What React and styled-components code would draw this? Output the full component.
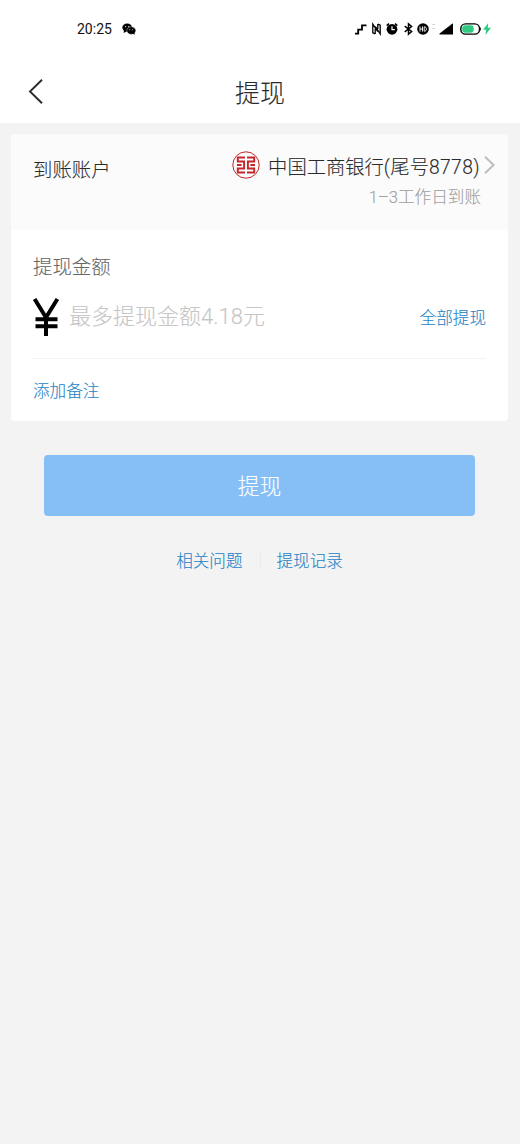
import React from 'react';
import styled, { createGlobalStyle } from 'styled-components';

const Global = createGlobalStyle`
  * { box-sizing: border-box; }
  body { margin: 0; background: #f3f3f3; }
`;

const Page = styled.div`
  width: 520px;
  height: 1144px;
  background: #f3f3f3;
  font-family: "Noto Sans CJK SC", sans-serif;
  font-weight: 300;
  color: #2b2b2b;
  -webkit-text-stroke: 0.1px currentColor;
`;

const StatusBar = styled.header`
  display: flex;
  align-items: center;
  height: 58px;
  padding: 0 29px 0 77px;
  background: #fff;
  color: #000;
`;

const Clock = styled.span`
  font: 400 14px/20px Roboto, sans-serif;
  -webkit-text-stroke: 0;
  color: #111;
  width: 45px;
`;

const StatusIcons = styled.div`
  display: flex;
  align-items: center;
  margin-left: auto;
`;

const Svg = styled.svg`
  display: block;
  flex: none;
  overflow: visible;
  margin-left: ${(p) => p.$gap || 0}px;
`;

const TitleBar = styled.div`
  display: grid;
  grid-template-columns: 60px 1fr 60px;
  align-items: center;
  height: 65px;
  padding-top: 1px;
  background: #fff;
`;

const Title = styled.h1`
  margin: 0;
  text-align: center;
  font-size: 25px;
  line-height: 36px;
  font-weight: 300;
`;

const Card = styled.section`
  margin: 11px 11px 0 11px;
  width: 497px;
  height: 287px;
  border-radius: 4px;
  background: #fff;
  overflow: hidden;
`;

const AccountRow = styled.div`
  display: flex;
  justify-content: space-between;
  height: 96px;
  padding: 0 13px 0 22px;
  background: #fbfbfb;
`;

const Label = styled.div`
  font-size: 19.4px;
  line-height: 28px;
  color: ${(p) => p.$color || '#2b2b2b'};
  margin-top: ${(p) => p.$top}px;
`;

const Account = styled.div`
  display: flex;
  flex-direction: column;
  align-items: flex-end;
  padding-top: 16px;
`;

const Bank = styled.div`
  display: flex;
  align-items: center;
  height: 30px;
  font-size: 19.3px;
  white-space: nowrap;
`;

const BankName = styled.span`
  margin: 1px 4px 0 8px;
`;

const Num = styled.span`
  font-family: Roboto, sans-serif;
  font-weight: 300;
  letter-spacing: ${(p) => p.$track || 0}px;
`;

const Arrival = styled.div`
  margin: 4px 14px 0 0;
  font-size: 16.6px;
  line-height: 24px;
  color: #a0a0a0;
`;

const AmountSection = styled.div`
  padding: 0 22px;
`;

const AmountRow = styled.div`
  display: flex;
  align-items: center;
  height: 79px;
  border-bottom: 1px solid #f3f3f3;
`;

const Placeholder = styled.span`
  margin: -8px 0 0 10px;
  font-size: 22px;
  line-height: 32px;
  color: #c6c6c6;
`;

const Link = styled.a`
  font-size: 16.6px;
  line-height: 24px;
  color: #2483c6;
`;

const AllLink = styled(Link)`
  margin: -4px 0 0 auto;
`;

const Note = styled.div`
  display: flex;
  padding-top: 19px;
`;

const Submit = styled.button`
  display: block;
  width: 431px;
  height: 61px;
  margin: 34px 0 0 44px;
  padding: 0 0 1px;
  border: 0;
  border-radius: 4px;
  background: #86bef6;
  color: #fff;
  font: 300 21.8px/32px "Noto Sans CJK SC", sans-serif;
`;

const Footer = styled.nav`
  display: flex;
  justify-content: center;
  align-items: center;
  margin: 32px 1px 0 0;
`;

const Divider = styled.i`
  width: 1px;
  height: 18px;
  margin: 0 16px 0 17px;
  background: #ececec;
`;

const WeChat = () => (
  <Svg width="14" height="12" viewBox="0 0 14 12">
    <ellipse cx="5.2" cy="4.6" rx="4.9" ry="4.2" />
    <path d="M2 7.5 1.6 10 4.5 8.6Z" />
    <ellipse cx="9.3" cy="7.6" rx="4.5" ry="3.8" stroke="#fff" strokeWidth=".4" />
    <path d="m10.5 10.5 2.2 1.3-.3-2.5Z" />
    <g fill="#fff"><circle cx="3.6" cy="3.6" r=".55" /><circle cx="6.7" cy="3.6" r=".55" /><circle cx="7.8" cy="6.8" r=".5" /><circle cx="10.7" cy="6.8" r=".5" /></g>
  </Svg>
);

const Stairs = () => (
  <Svg width="12" height="11" viewBox="0 0 12 11" fill="none" stroke="#000" strokeWidth="1.8">
    <path d="M0 9.6H3.2V5.6H7V1.4H11.5" />
  </Svg>
);

const Nfc = () => (
  <Svg $gap={5} width="9" height="12" viewBox="0 0 9 12" fill="none" stroke="#000" strokeWidth="1.3">
    <path d="M3.2 10.9 .8 9.8V1.2L5.6 8.4M5.8 1.1 8.2 2.2V10.8L3.4 3.6M3.2 6V10.9M5.8 1.1V6" />
  </Svg>
);

const Alarm = () => (
  <Svg $gap={5} width="12" height="12" viewBox="0 0 12 12">
    <circle cx="6" cy="6.3" r="5.4" />
    <path d="M.7 2.6 3 .7M11.3 2.6 9 .7" stroke="#000" strokeWidth="1.5" />
    <path d="M6 3.2V6.6H8.8" fill="none" stroke="#fff" strokeWidth="1.2" />
  </Svg>
);

const Bluetooth = () => (
  <Svg $gap={6} width="9" height="12" viewBox="0 0 9 12" fill="none" stroke="#000" strokeWidth="1.5">
    <path d="M.7 3.2 7.6 8.5 4.5 11.2V.8L7.6 3.5.7 8.8" />
  </Svg>
);

const Hd = () => (
  <Svg $gap={4} width="12" height="12" viewBox="0 0 12 12">
    <circle cx="6" cy="6" r="5.8" />
    <path d="M3 3.4V8.6M5.5 3.4V8.6M3 6H5.5M7.2 3.8V8.2H7.6C10 8.2 10 3.8 7.6 3.8Z" fill="none" stroke="#fff" strokeWidth=".9" />
  </Svg>
);

const Signal = () => (
  <Svg $gap={3} width="22" height="12" viewBox="0 0 22 12">
    <path d="M.5 1.5H2.8M.5 5.5H2.8" stroke="#ccc" />
    <path d="M21 .8V11.4H7.6Q7 11 7.6 10.4L19.8.9Q20.8 .2 21 .8Z" />
  </Svg>
);

const Battery = () => (
  <Svg $gap={6} width="21" height="12" viewBox="0 0 21 12">
    <rect x=".8" y=".9" width="18.7" height="10.2" rx="4.7" fill="#fff" stroke="#000" strokeWidth="1.4" />
    <path d="M20.3 4.5V7.5" stroke="#000" />
    <rect x="2.2" y="2.3" width="11.5" height="7.4" rx="3.2" fill="#30cb83" />
  </Svg>
);

const Bolt = () => (
  <Svg $gap={2} width="8" height="12" viewBox="0 0 8 12" fill="#30cb83">
    <path d="M5.2 0 0 6.8H3L2.5 12 8 4.8H4.8Z" />
  </Svg>
);

const Back = () => (
  <Svg $gap={29} width="14" height="25" viewBox="0 0 14 25" fill="none" stroke="#2b2b2b" strokeWidth="1.9">
    <path d="M13 .8 1 12.5 13 24.2" />
  </Svg>
);

const IcbcLogo = () => (
  <Svg width="28" height="28" viewBox="0 0 28 28" fill="none" stroke="#c4262b">
    <circle cx="14" cy="14" r="13.2" strokeWidth="1" />
    <path d="M13 6.5H5.8V10.5H12.1V17.5H5.8V21.5H13M5 14H9.6M15 6.5H22.2V10.5H15.9V17.5H22.2V21.5H15M23 14H18.4" strokeWidth="1.9" />
  </Svg>
);

const Chevron = () => (
  <Svg width="11" height="18" viewBox="0 0 11 18" fill="none" stroke="#bdbdbd" strokeWidth="2">
    <path d="M1 .8 9.6 9 1 17.2" />
  </Svg>
);

const Yen = () => (
  <Svg width="26" height="37" viewBox="0 0 26 37" fill="none" stroke="#000" strokeWidth="4">
    <path d="M1.6 0 13 18.5 24.4 0M13 17V37M2.5 20.2H24.5M2.5 27.2H24.5" />
  </Svg>
);

const YenBox = styled.span`
  margin-top: -4px;
`;

export default function App() {
  return (
    <Page>
      <Global />
      <StatusBar>
        <Clock>20:25</Clock>
        <WeChat />
        <StatusIcons>
          <Stairs /><Nfc /><Alarm /><Bluetooth /><Hd /><Signal /><Battery /><Bolt />
        </StatusIcons>
      </StatusBar>
      <TitleBar>
        <Back />
        <Title>提现</Title>
      </TitleBar>
      <Card>
        <AccountRow>
          <Label $top={21}>到账账户</Label>
          <Account>
            <Bank>
              <IcbcLogo />
              <BankName>中国工商银行<Num $track={0.4}>(</Num>尾号<Num $track={0.4}>8778)</Num></BankName>
              <Chevron />
            </Bank>
            <Arrival><Num>1–3</Num>工作日到账</Arrival>
          </Account>
        </AccountRow>
        <AmountSection>
          <Label $top={22} $color="#666">提现金额</Label>
          <AmountRow>
            <YenBox><Yen /></YenBox>
            <Placeholder>最多提现金额<Num>4.18</Num>元</Placeholder>
            <AllLink>全部提现</AllLink>
          </AmountRow>
          <Note><Link>添加备注</Link></Note>
        </AmountSection>
      </Card>
      <Submit>提现</Submit>
      <Footer>
        <Link>相关问题</Link>
        <Divider />
        <Link>提现记录</Link>
      </Footer>
    </Page>
  );
}
